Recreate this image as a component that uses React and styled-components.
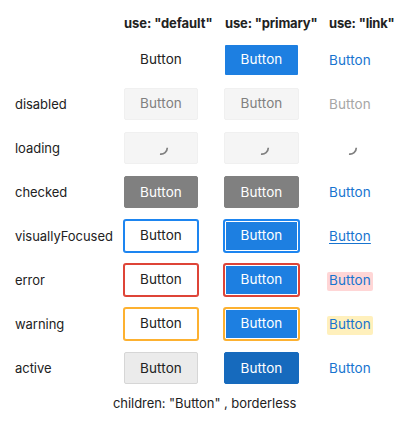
import React from "react";
import styled, { createGlobalStyle, css } from "styled-components";

const GlobalStyle = createGlobalStyle`
  * { box-sizing: border-box; }
  body {
    margin: 0;
    background: #fff;
    color: #222;
    font: 13px/20px Inter, "Liberation Sans", sans-serif;
  }
`;

const Page = styled.main`
  width: 409px;
  height: 436px;
  padding: 8px 0 0 15px;
  overflow: hidden;
`;

const Table = styled.div`
  display: grid;
  grid-template-columns: 109px 100px 105px 80px;
  grid-template-rows: 30px repeat(8, 44px);
`;

const Heading = styled.div`
  padding-top: 5px;
  padding-left: ${(p) => p.$inset || 0}px;
  font-weight: 700;
  white-space: nowrap;
  letter-spacing: ${(p) => p.$spacing}px;
`;

const Label = styled.div`
  padding-top: 12px;
  white-space: nowrap;
  letter-spacing: -0.04px;
`;

const Cell = styled.div`
  padding-top: ${(p) => (p.$link ? 12 : 6)}px;
`;

const primaryRing = (color) => css`
  border-color: ${color};
  box-shadow: 0 0 0 1px ${color}, inset 0 0 0 1px #fff;
`;

const defaultRing = (color) => css`
  border-color: ${color};
  box-shadow: 0 0 0 1px ${color};
`;

const muted = css`
  background: #f5f5f5;
  border-color: #f0f0f0;
  color: #808080;
`;

const checked = css`
  background: #808080;
  border-color: #808080;
  color: #fff;
`;

const ringColors = { visuallyFocused: "#1d85f0", error: "#de4437", warning: "#fdb130" };

const Button = styled.button`
  display: flex;
  justify-content: center;
  width: ${(p) => (p.$primary ? 75 : 74)}px;
  height: 32px;
  padding: ${(p) => (p.$state === "checked" || p.$state === "active" ? 5 : 4)}px 0 0;
  border: 1px solid transparent;
  border-radius: 2px;
  background: ${(p) => (p.$primary ? "#1d7fe1" : "#fff")};
  background-clip: ${(p) => (p.$state ? "border-box" : "padding-box")};
  color: ${(p) => (p.$primary ? "#fff" : "#222")};
  font: inherit;
  font-size: 13.5px;
  letter-spacing: 0.1px;
  ${(p) => (p.$state === "disabled" || p.$state === "loading") && muted}
  ${(p) => p.$state === "checked" && checked}
  ${(p) => p.$state === "active" && (p.$primary
    ? css`background: #166abd; border-color: #166abd;`
    : css`background: #ebebeb; border-color: #d6d6d6;`)}
  ${(p) => ringColors[p.$state] && (p.$primary ? primaryRing : defaultRing)(ringColors[p.$state])}
`;

const Link = styled.a`
  display: block;
  width: 46px;
  height: 19px;
  margin: 2px 0 0 -2px;
  padding: 0 2px;
  border-radius: 2px;
  font-size: 13.5px;
  line-height: 16px;
  letter-spacing: 0.1px;
  color: ${(p) => (p.$state === "disabled" ? "#a6a6a6" : "#1874cf")};
  background: ${(p) => ({ error: "#ffd6d6", warning: "#fff0bc" })[p.$state] || "transparent"};
  text-decoration: ${(p) => (p.$state === "visuallyFocused" ? "underline" : "none")};
  text-underline-offset: 2px;
`;

const Spinner = styled.svg`
  display: block;
  width: 16px;
  height: 16px;
  margin: ${(p) => (p.$link ? "2px 0 0 14px" : "3px 0 0 2px")};
`;

const Caption = styled.p`
  margin: 3px 0 0 98px;
  letter-spacing: -0.06px;
`;

const states = ["", "disabled", "loading", "checked", "visuallyFocused", "error", "warning", "active"];

function Loader({ link }) {
  return (
    <Spinner $link={link} viewBox="0 0 16 16" fill="none" stroke="#808080" strokeWidth="1.7">
      <path d="M13.3 7.8A6.4 6.4 0 0 1 6 14.1" />
    </Spinner>
  );
}

export default function App() {
  return (
    <>
      <GlobalStyle />
      <Page>
        <Table>
          <span />
          <Heading $spacing={-0.08}>use: "default"</Heading>
          <Heading $spacing={-0.16} $inset={1}>use: "primary"</Heading>
          <Heading $spacing={-0.18}>use: "link"</Heading>
          {states.map((state) => (
            <React.Fragment key={state}>
              <Label>{state}</Label>
              <Cell>
                <Button $state={state}>{state === "loading" ? <Loader /> : "Button"}</Button>
              </Cell>
              <Cell>
                <Button $primary $state={state}>{state === "loading" ? <Loader /> : "Button"}</Button>
              </Cell>
              <Cell $link>
                {state === "loading" ? <Loader link /> : <Link $state={state}>Button</Link>}
              </Cell>
            </React.Fragment>
          ))}
        </Table>
        <Caption>children: "Button" , borderless</Caption>
      </Page>
    </>
  );
}
